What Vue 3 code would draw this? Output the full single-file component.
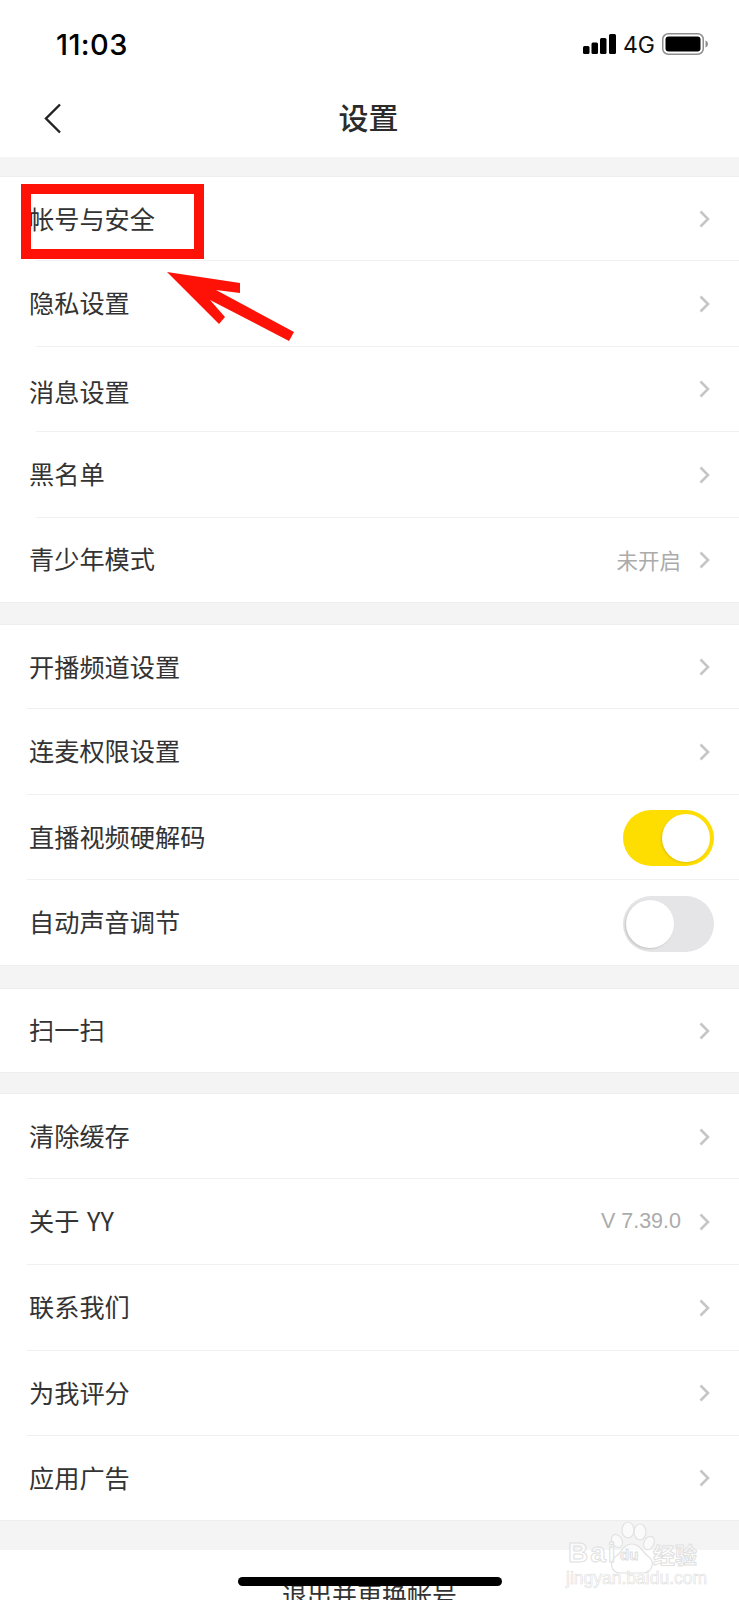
<script setup>
const groups = [
  { cls: 'g1', rows: [{ t: '帐号与安全' }, { t: '隐私设置' }, { t: '消息设置', low: true }, { t: '黑名单' }, { t: '青少年模式', v: '未开启' }] },
  { cls: 'g2', rows: [{ t: '开播频道设置' }, { t: '连麦权限设置' }, { t: '直播视频硬解码', sw: 'on' }, { t: '自动声音调节', sw: 'off' }] },
  { cls: 'g3', rows: [{ t: '扫一扫' }] },
  { cls: 'g4', rows: [{ t: '清除缓存' }, { t: '关于 YY', v: 'V 7.39.0' }, { t: '联系我们' }, { t: '为我评分' }, { t: '应用广告' }] },
]
</script>

<template>
  <div class="page">
    <div class="status">
      <span class="time">11:03</span>
      <div class="status-right">
        <svg class="signal" width="33" height="20" viewBox="0 0 33 20">
          <rect x="0" y="12" width="6.500" height="8" rx="1.500" fill="#000" />
          <rect x="8.500" y="8.500" width="6.500" height="11.500" rx="1.500" fill="#000" />
          <rect x="17" y="4" width="6.500" height="16" rx="1.500" fill="#000" />
          <rect x="26" y="0" width="7" height="20" rx="1.500" fill="#000" />
        </svg>
        <span class="net">4G</span>
        <svg class="battery" width="46" height="22" viewBox="0 0 46 22">
          <rect x="0.750" y="0.750" width="40.500" height="20.500" rx="5.500" fill="none" stroke="#8e8e8e" stroke-width="1.500" />
          <rect x="3.500" y="3.500" width="35" height="15" rx="3" fill="#000" />
          <path d="M43.500 7.500c1.500.6 2.500 2 2.500 3.500s-1 2.900-2.500 3.500z" fill="#8e8e8e" />
        </svg>
      </div>
    </div>

    <div class="nav">
      <svg class="back" width="18" height="31" viewBox="0 0 18 31">
        <path d="M16 1.500 2 15.500l14 14" fill="none" stroke="#222" stroke-width="2.400" />
      </svg>
      <span class="title">设置</span>
    </div>

    <div v-for="g in groups" :key="g.cls" class="group" :class="g.cls">
      <div v-for="r in g.rows" :key="r.t" class="row">
        <span class="label" :class="{ low: r.low }">{{ r.t }}</span>
        <span v-if="r.v" class="value">{{ r.v }}</span>
        <div v-if="r.sw" class="switch" :class="r.sw"><i class="knob"></i></div>
        <svg v-else class="chev" width="11" height="18" viewBox="0 0 11 18">
          <path d="M1.500 1.500 9 9l-7.500 7.500" fill="none" stroke="#c6c6c6" stroke-width="2.600" />
        </svg>
      </div>
    </div>

    <div class="logout">退出并更换帐号</div>

    <div class="redbox"></div>
    <svg class="arrow" width="140" height="80" viewBox="160 268 140 80">
      <path d="M167 272 240 283 240 293 216 290 294 332 289 341 210 300 225 317 219 324z" fill="#fe1208" />
    </svg>

    <div class="homebar"></div>

    <div class="mark">
      <svg class="paw" width="70" height="60" viewBox="0 0 70 60">
        <g fill="#fff" fill-opacity=".55" stroke="#e2e2e2" stroke-width="1.200">
          <ellipse cx="26" cy="11" rx="6" ry="8" />
          <ellipse cx="38" cy="13" rx="6" ry="8" />
          <ellipse cx="15" cy="22" rx="5" ry="7" transform="rotate(-30 15 22)" />
          <ellipse cx="47" cy="24" rx="5" ry="7" transform="rotate(25 47 24)" />
          <path d="M30 25c8 0 10 8 17 13 6 5 3 16-6 16H18c-9 0-11-11-5-16 7-4 8-13 17-13z" />
        </g>
      </svg>
      <span class="bai">Bai</span>
      <span class="du">du</span>
      <span class="jy">经验</span>
      <span class="url">jingyan.baidu.com</span>
    </div>
  </div>
</template>

<style>
html, body { margin: 0; background: #fff; }
</style>

<style scoped>
.page {
  position: relative;
  width: 739px;
  height: 1600px;
  overflow: hidden;
  background: #f4f4f4;
  font-family: "Liberation Sans", "Noto Sans CJK SC", sans-serif;
  color: #333;
}
.status {
  height: 82px;
  background: #fff;
  display: flex;
  align-items: flex-start;
  justify-content: space-between;
  padding: 0 31px 0 56px;
  box-sizing: border-box;
}
.time {
  margin-top: 28px;
  font-family: Inter, sans-serif;
  font-weight: 500;
  font-size: 29px;
  line-height: 34px;
  letter-spacing: .4px;
  color: #000;
}
.status-right { display: flex; align-items: flex-start; margin-top: 33px; }
.signal { margin: 1px 7px 0 0; }
.net {
  font-family: Inter, sans-serif;
  font-size: 23px;
  line-height: 24px;
  width: 39px;
  color: #111;
}
.nav {
  height: 75px;
  background: #fff;
  display: flex;
  align-items: center;
  justify-content: center;
  position: relative;
}
.back { position: absolute; left: 44px; top: 21px; }
.title {
  font-family: "Noto Sans CJK SC", sans-serif;
  font-size: 30px;
  font-weight: 500;
  color: #2b2b2b;
  margin: -7px 2px 0 0;
}
.group {
  background: #fff;
  border-top: 1px solid #eeeeee;
  border-bottom: 1px solid #eeeeee;
}
.g1 { margin-top: 19px; }
.g2 { margin-top: 21px; }
.g3 { margin-top: 22.500px; }
.g4 { margin-top: 20px; }
.row {
  height: 85.500px;
  box-sizing: border-box;
  display: flex;
  align-items: center;
  padding: 0 25px 0 29px;
  background: linear-gradient(#f0f0f0, #f0f0f0) 27px 100% / 100% 1px no-repeat;
}
.g1 .row { background-position: 36px 100%; }
.row:first-child { height: 84px; }
.row:last-child, .g1 .row:last-child { background: none; height: 84.500px; }
.g3 .row { height: 83px; }
.g4 .row { height: 85.800px; }
.g4 .row:first-child { height: 85px; }
.g4 .row:last-child { height: 83.500px; }
.label {
  flex: 1;
  font-family: "Noto Sans CJK SC", sans-serif;
  font-size: 25.200px;
  line-height: 34px;
  padding-bottom: 3px;
  word-spacing: 2px;
  color: #333;
}
.label.low { padding-top: 7px; }
.value { font-size: 21.500px; color: #ababab; margin-right: 18px; }
.chev { margin-right: 4px; }
.switch {
  width: 91px;
  height: 56px;
  border-radius: 28px;
  display: flex;
  align-items: center;
  box-sizing: border-box;
}
.switch.on { background: #fedd00; justify-content: flex-end; padding-right: 4px; margin-top: 2px; }
.switch.off { background: #e5e5e7; padding-left: 3px; margin-top: 4px; }
.knob {
  width: 48px;
  height: 48px;
  border-radius: 50%;
  background: #fff;
}
.switch.off .knob { box-shadow: -1px 1px 2px #c4c4c4; }
.switch.on .knob { box-shadow: -1px 1px 2px #e5c400; }
.logout {
  margin-top: 29.500px;
  height: 88px;
  background: #fff;
  display: flex;
  align-items: center;
  justify-content: center;
  font-family: "Noto Sans CJK SC", sans-serif;
  font-size: 25px;
  line-height: 34px;
  color: #333;
}
.redbox {
  position: absolute;
  left: 21px;
  top: 184px;
  width: 183px;
  height: 75px;
  box-sizing: border-box;
  border: 10px solid #fe1208;
}
.arrow { position: absolute; left: 160px; top: 268px; }
.homebar {
  position: absolute;
  left: 238px;
  top: 1577px;
  width: 264px;
  height: 9px;
  border-radius: 5px;
  background: #000;
}
.mark { position: absolute; left: 560px; top: 1500px; width: 179px; height: 100px; }
.paw { position: absolute; left: 42px; top: 19px; }
.bai, .du, .jy, .url { position: absolute; color: rgba(255,255,255,.6); -webkit-text-stroke: 1px #e0e0e0; }
.bai { left: 8px; top: 37px; font: 700 28px/32px "Liberation Sans", sans-serif; letter-spacing: 2px; }
.du { left: 60px; top: 46px; font: 700 15px/18px "Liberation Sans", sans-serif; }
.jy { left: 93px; top: 38px; font: 700 22px/30px "Noto Sans CJK SC", sans-serif; }
.url { left: 6px; top: 68px; font: 400 17.500px/20px "Liberation Sans", sans-serif; -webkit-text-stroke: .6px #e0e0e0; }
</style>
